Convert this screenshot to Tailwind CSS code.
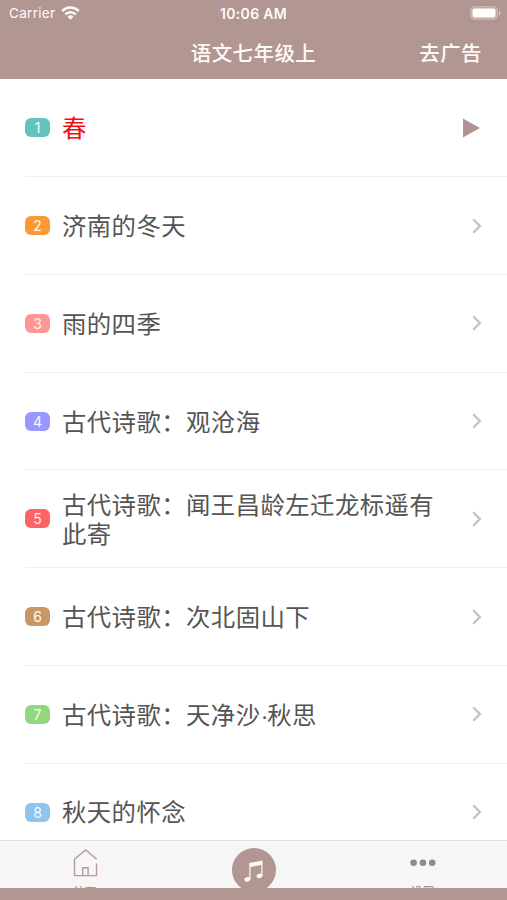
<!DOCTYPE html>
<html lang="zh-CN">
<head>
<meta charset="utf-8">
<title>语文七年级上</title>
<script src="https://cdn.jsdelivr.net/npm/@tailwindcss/browser@4"></script>
</head>
<body class="w-[507px] h-[900px] overflow-hidden flex flex-col bg-white font-['Noto_Sans_CJK_SC',sans-serif]">
<header class="h-[79.4px] shrink-0 bg-[#b19692] text-[#fffaf6]">
  <div class="h-[27px] grid grid-cols-3 items-center font-[Inter,sans-serif] text-[13.5px] leading-none">
    <div class="flex items-center gap-[6px] pl-[9px] pt-px">
      <span class="tracking-[0.3px]">Carrier</span>
      <svg class="w-[19px] h-[14px] -mt-[2px]" viewBox="0 0 19 14" fill="none" stroke="currentColor" stroke-width="2.5"><path d="M1.2 5a11.7 11.7 0 0 1 16.6 0"/><path d="M4.2 8.4a7.5 7.5 0 0 1 10.6 0"/><path d="M6.4 10.6a4.4 4.4 0 0 1 6.2 0L9.5 13.8z" fill="currentColor" stroke="none"/></svg>
    </div>
    <span class="text-center text-[14px] pt-px font-semibold tracking-[0.3px]">10:06 AM</span>
    <svg class="justify-self-end mr-[6px] w-[31px] h-[14px] -mt-px" viewBox="0 0 31 14"><rect x=".5" y=".5" width="27" height="13" rx="4" fill="#fff" fill-opacity=".2" stroke="#fff" stroke-opacity=".25"/><rect x="2.5" y="2.5" width="23" height="9" rx="2" fill="#fffefa"/><path d="M29 4.8v4.4q1.6-.8 1.6-2.2T29 4.8" fill="#fff" fill-opacity=".5"/></svg>
  </div>
  <div class="h-[49px] grid grid-cols-[1fr_auto_1fr] items-center text-[20.5px] leading-[30px] font-medium tracking-[0.4px]">
    <span></span><h1 class="font-medium">语文七年级上</h1><span class="justify-self-end pr-[25px]">去广告</span>
  </div>
</header>
<main class="flex-1 min-h-0 overflow-hidden text-[24.4px] leading-[29px] tracking-[0.42px] text-[#555]">
  <div class="h-[97.75px] pl-[25px] flex">
    <div class="flex-1 flex items-center border-b-[1.5px] border-[#eeeeee]"><span class="w-[25px] h-[19px] rounded-[6px] bg-[#62c5bc] text-[#f8fffc] font-[Inter,sans-serif] text-[14px] leading-[19px] tracking-normal text-center">1</span><p class="ml-[12px] w-[380px] pb-[2px] text-[#f20d0d]">春</p><svg class="ml-[20px] w-[19px] h-[20px]" viewBox="0 0 19 20"><path d="M1 .5v19L18 10z" fill="#b19495"/></svg></div>
  </div>
  <div class="h-[97.75px] pl-[25px] flex">
    <div class="flex-1 flex items-center border-b-[1.5px] border-[#eeeeee]"><span class="w-[25px] h-[19px] rounded-[6px] bg-[#fd9833] text-[#fff8eb] font-[Inter,sans-serif] text-[14px] leading-[19px] tracking-normal text-center">2</span><p class="ml-[12px] w-[380px] pb-[2px]">济南的冬天</p><svg class="ml-[29px] w-[12px] h-[16px]" viewBox="0 0 12 16" fill="none" stroke="#c3c3c3" stroke-width="2.3"><path d="M2.2 1.3 8.9 8 2.2 14.7"/></svg></div>
  </div>
  <div class="h-[97.75px] pl-[25px] flex">
    <div class="flex-1 flex items-center border-b-[1.5px] border-[#eeeeee]"><span class="w-[25px] h-[19px] rounded-[6px] bg-[#ff9696] text-[#fff3f0] font-[Inter,sans-serif] text-[14px] leading-[19px] tracking-normal text-center">3</span><p class="ml-[12px] w-[380px] pb-[2px]">雨的四季</p><svg class="ml-[29px] w-[12px] h-[16px]" viewBox="0 0 12 16" fill="none" stroke="#c3c3c3" stroke-width="2.3"><path d="M2.2 1.3 8.9 8 2.2 14.7"/></svg></div>
  </div>
  <div class="h-[97.75px] pl-[25px] flex">
    <div class="flex-1 flex items-center border-b-[1.5px] border-[#eeeeee]"><span class="w-[25px] h-[19px] rounded-[6px] bg-[#9998ff] text-[#f7f6ff] font-[Inter,sans-serif] text-[14px] leading-[19px] tracking-normal text-center">4</span><p class="ml-[12px] w-[380px] pb-[2px]">古代诗歌：观沧海</p><svg class="ml-[29px] w-[12px] h-[16px]" viewBox="0 0 12 16" fill="none" stroke="#c3c3c3" stroke-width="2.3"><path d="M2.2 1.3 8.9 8 2.2 14.7"/></svg></div>
  </div>
  <div class="h-[97.75px] pl-[25px] flex">
    <div class="flex-1 flex items-center border-b-[1.5px] border-[#eeeeee]"><span class="w-[25px] h-[19px] rounded-[6px] bg-[#ff6263] text-[#fff3ee] font-[Inter,sans-serif] text-[14px] leading-[19px] tracking-normal text-center">5</span><p class="ml-[12px] w-[380px] pb-[2px]">古代诗歌：闻王昌龄左迁龙标遥有此寄</p><svg class="ml-[29px] w-[12px] h-[16px]" viewBox="0 0 12 16" fill="none" stroke="#c3c3c3" stroke-width="2.3"><path d="M2.2 1.3 8.9 8 2.2 14.7"/></svg></div>
  </div>
  <div class="h-[97.75px] pl-[25px] flex">
    <div class="flex-1 flex items-center border-b-[1.5px] border-[#eeeeee]"><span class="w-[25px] h-[19px] rounded-[6px] bg-[#c99767] text-[#fff9ed] font-[Inter,sans-serif] text-[14px] leading-[19px] tracking-normal text-center">6</span><p class="ml-[12px] w-[380px] pb-[2px]">古代诗歌：次北固山下</p><svg class="ml-[29px] w-[12px] h-[16px]" viewBox="0 0 12 16" fill="none" stroke="#c3c3c3" stroke-width="2.3"><path d="M2.2 1.3 8.9 8 2.2 14.7"/></svg></div>
  </div>
  <div class="h-[97.75px] pl-[25px] flex">
    <div class="flex-1 flex items-center border-b-[1.5px] border-[#eeeeee]"><span class="w-[25px] h-[19px] rounded-[6px] bg-[#92d77e] text-[#f7fff1] font-[Inter,sans-serif] text-[14px] leading-[19px] tracking-normal text-center">7</span><p class="ml-[12px] w-[380px]">古代诗歌：天净沙<span class="font-['Liberation_Sans',sans-serif] tracking-[-1.5px]">·</span>秋思</p><svg class="ml-[29px] w-[12px] h-[16px]" viewBox="0 0 12 16" fill="none" stroke="#c3c3c3" stroke-width="2.3"><path d="M2.2 1.3 8.9 8 2.2 14.7"/></svg></div>
  </div>
  <div class="h-[97.75px] pl-[25px] flex">
    <div class="flex-1 flex items-center border-b-[1.5px] border-[#eeeeee]"><span class="w-[25px] h-[19px] rounded-[6px] bg-[#8fc5ed] text-[#f5fcff] font-[Inter,sans-serif] text-[14px] leading-[19px] tracking-normal text-center">8</span><p class="ml-[12px] w-[380px] pb-[3px]">秋天的怀念</p><svg class="ml-[29px] w-[12px] h-[16px]" viewBox="0 0 12 16" fill="none" stroke="#c3c3c3" stroke-width="2.3"><path d="M2.2 1.3 8.9 8 2.2 14.7"/></svg></div>
  </div>
</main>
<nav class="h-[48px] shrink-0 overflow-hidden grid grid-cols-3 border-t-[1.5px] border-[#dedede] bg-[#f6f6f6] text-[12px] leading-[18px]">
  <div class="h-[64px] flex flex-col items-center text-[#9c8582]">
    <svg class="mt-[7px] w-[28px] h-[30px]" viewBox="0 0 28 30" fill="none" stroke="#b59c99" stroke-width="1.4"><path d="M25.7 11.2 14.7 2 3.5 11.2v16.4h22V15.4M11.8 27.6v-7.8h5.3v7.8"/></svg>
    <span class="mt-[5px]">首页</span>
  </div>
  <div class="h-[64px] flex flex-col items-center">
    <svg class="mt-[7px] w-[44px] h-[44px] shrink-0" viewBox="0 0 44 44"><circle cx="22" cy="22" r="22" fill="#b19692"/><g fill="#fffaf4"><path d="M17.3 15 30.5 12.6V28h-1.2V16.9L18.5 18.9V31.5h-1.2z"/><ellipse cx="15.4" cy="31.3" rx="3" ry="2.2" transform="rotate(-15 15.4 31.3)"/><ellipse cx="27.5" cy="27.8" rx="3" ry="2.2" transform="rotate(-15 27.5 27.8)"/></g></svg>
  </div>
  <div class="h-[64px] flex flex-col items-center text-[#888]">
    <svg class="mt-[7px] w-[28px] h-[30px]" viewBox="0 0 28 30" fill="#8c8c8c"><circle cx="4.6" cy="14.8" r="3.3"/><circle cx="13.9" cy="14.8" r="3.3"/><circle cx="23.2" cy="14.8" r="3.3"/></svg>
    <span class="mt-[5px]">设置</span>
  </div>
</nav>
<footer class="h-[12px] shrink-0 bg-[#b19692]"></footer>
</body>
</html>
